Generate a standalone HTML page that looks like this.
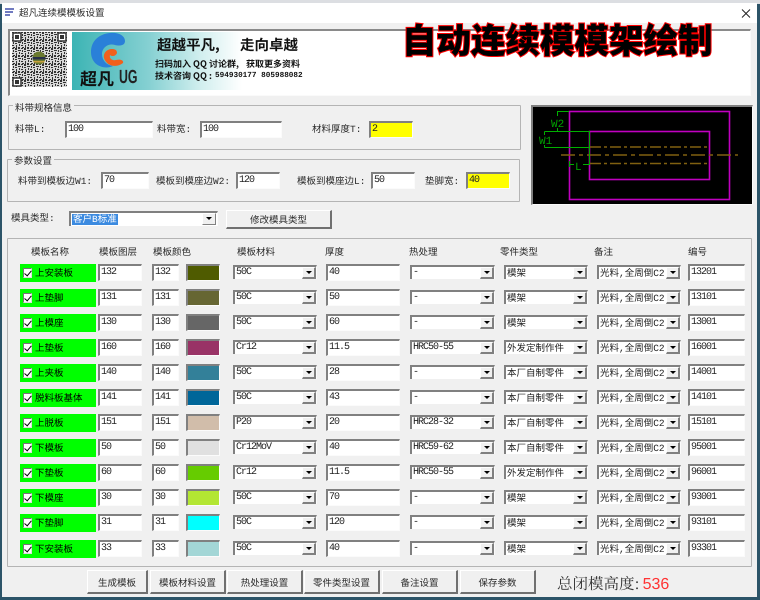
<!DOCTYPE html>
<html lang="zh"><head><meta charset="utf-8"><title>超凡连续模模板设置</title>
<style>
*{box-sizing:border-box}
html,body{margin:0;padding:0;width:760px;height:600px;overflow:hidden;background:#2c5468}
body{position:relative;font:10px "Liberation Mono","Noto Sans CJK SC",monospace;color:#222;text-rendering:geometricPrecision}
div,span,svg{position:absolute}
#strip{left:0;top:0;width:760px;height:4px;background:#dcdee2}
#win{left:2px;top:3px;width:755px;height:594px;background:#f0f0f0;overflow:hidden}
#tb{left:0;top:0;width:755px;height:20px;background:#fff}
.l{white-space:nowrap;font-size:9.500px;line-height:14px;color:#2a2a2a;transform:translateY(2px)}
.g{border:1px solid #b4b4b4;border-radius:1px}
.gt{background:#f0f0f0;padding:0 2px;white-space:nowrap;font-size:9.500px;line-height:13px;color:#2a2a2a;transform:translateY(2px)}
.i,.s{height:17px;background:#fff;border-top:2px solid #808080;border-left:2px solid #808080;border-bottom:1px solid #fbfbfb;border-right:1px solid #fbfbfb;font-size:10px;letter-spacing:-1px;line-height:13px;padding-left:1px;white-space:nowrap;overflow:hidden;color:#222}
.s{height:14px;margin-top:1px;border-bottom:0;line-height:12px}
.s u{position:absolute;right:0;top:0;width:14px;height:12px;background:#f0f0f0;border-right:2px solid #808080;border-bottom:2px solid #808080;border-top:1px solid #fff;border-left:1px solid #fff}
.s u:after{content:"";position:absolute;left:3px;top:3px;border-left:3px solid transparent;border-right:3px solid transparent;border-top:3px solid #000}
.z,.e{font-size:9.500px;letter-spacing:0;line-height:13px}
.r{left:0;width:755px;height:18px}
.r>div{top:0}
.n{left:18px;width:76px;height:18px;background:#00ff00;color:#000;font-size:9.500px;line-height:20px;padding-left:15px;white-space:nowrap}
.n i{position:absolute;left:3px;top:4px;width:9px;height:10px;background:#fff;border-top:1px solid #777;border-left:1px solid #777;border-right:1px solid #ddd;border-bottom:1px solid #ddd}
.n i:after{content:"";position:absolute;left:2px;top:0;width:3px;height:6px;border-right:1.500px solid #000;border-bottom:1.500px solid #000;transform:rotate(40deg)}
.a{left:96px;width:44px}.b{left:150px;width:27px}
.w{left:184px;width:34px;height:17px;border-top:2px solid #808080;border-left:2px solid #808080;border-bottom:1px solid #fbfbfb;border-right:1px solid #fbfbfb}
.m{left:231px;width:84px}.t{left:324px;width:74px}.h{left:408px;width:85px}.p{left:502px;width:84px}.q{left:595px;width:84px}.o{left:686px;width:57px}
.bt{height:24px;background:#f0f0f0;border-top:1px solid #fff;border-left:1px solid #fff;border-right:2px solid #707070;border-bottom:2px solid #707070;text-align:center;font-size:9.500px;line-height:25px;color:#2a2a2a;white-space:nowrap}
.b9{font:bold 9px 'Noto Sans CJK SC',sans-serif;line-height:12px;color:#111;white-space:pre}
</style></head><body>
<div id="strip"></div>
<div id="win">
<div id="tb"></div>
<svg style="left:3px;top:4px" width="14" height="12"><path d="M0 2H9M0 5H8M0 8H5" stroke="#1a2a9a" stroke-width="1.2" fill="none"/></svg>
<div class="l" style="left:17px;top:2px">超凡连续模模板设置</div>
<svg style="left:738px;top:5px" width="14" height="14"><path d="M2 1.500L10 9.500M10 1.500L2 9.500" stroke="#222" stroke-width="1" fill="none"/></svg>

<!-- banner -->
<div style="left:6px;top:26px;width:743px;height:67px;background:#fff;border-top:2px solid #8a8a8a;border-left:2px solid #8a8a8a;border-right:1px solid #fafafa;border-bottom:1px solid #fafafa"></div>
<svg style="left:10px;top:29px" width="55" height="55" viewBox="0 0 55 55">
<defs><pattern id="q" width="9" height="8" patternUnits="userSpaceOnUse"><rect width="9" height="8" fill="#d8d8d8"/><path d="M0 0h2v1H0zM3 0h2v2H3zM6 0h2v1H6zM1 2h1v2H1zM6 2h3v1H6zM3 3h2v1H3zM0 5h2v1H0zM4 5h1v3H4zM7 4h1v2H7zM1 7h2v1H1zM6 7h2v1H6z" fill="#333"/></pattern></defs>
<rect width="55" height="55" fill="url(#q)"/>
<g fill="#fff" stroke="#333" stroke-width="1.500"><rect x="1" y="1" width="8" height="8"/><rect x="46" y="1" width="8" height="8"/><rect x="1" y="46" width="8" height="8"/></g>
<g fill="#333"><rect x="3" y="3" width="4" height="4"/><rect x="48" y="3" width="4" height="4"/><rect x="3" y="48" width="4" height="4"/></g>
<circle cx="27" cy="26" r="6.500" fill="#6a7a30"/><rect x="20.500" y="25" width="13" height="2.500" fill="#28304a"/><rect x="21.500" y="29" width="11" height="1.500" fill="#c8a040"/>
</svg>
<div style="left:70px;top:29px;width:170px;height:58px;background:linear-gradient(90deg,#3cb4b4 0%,#85d0d2 45%,#d0eeee 75%,#ffffff 100%)"></div>
<svg style="left:85px;top:29px" width="45" height="40" viewBox="0 0 45 40">
<path d="M4 20C4 9 12 2 23 1C32 0 38 4 38 9C38 14 32 14 28 13C22 11 15 15 15 22C15 28 19 33 26 34C18 38 4 34 4 20Z" fill="#2a80d8"/>
<path d="M25 17C20 17 16 21 17 26C19 33 28 37 36 31C37 28 33 27 29 28C25 29 22 26 23 23C25 25 29 24 30 21C30 18 28 17 25 17Z" fill="#f0601c"/>
</svg>
<div style="left:78px;top:65px;font:bold 17px 'Noto Sans CJK SC',sans-serif;line-height:20px;color:#111;white-space:nowrap">超凡</div>
<div style="left:117px;top:65px;font:bold 19px 'Liberation Sans',sans-serif;line-height:20px;color:#222;transform:scaleX(.65);transform-origin:0 0;white-space:nowrap">UG</div>
<div style="left:155px;top:33px;font:bold 14.500px 'Noto Sans CJK SC',sans-serif;line-height:18px;color:#111;white-space:nowrap">超越平凡,</div>
<div style="left:238px;top:33px;font:bold 14.500px 'Noto Sans CJK SC',sans-serif;line-height:18px;color:#111;white-space:nowrap">走向卓越</div>
<div class="b9" style="left:153px;top:55px">扫码加入 QQ 讨论群,</div>
<div class="b9" style="left:244px;top:55px">获取更多资料</div>
<div class="b9" style="left:153px;top:67px">技术咨询 QQ :</div>
<div class="b9" style="left:213px;top:67px;font:bold 7.700px 'Liberation Mono',monospace;line-height:12px">594930177 805988082</div>
<div style="left:400px;top:15px;font:900 34.500px 'Noto Sans CJK SC',sans-serif;line-height:40px;color:#000;white-space:nowrap;-webkit-text-stroke:2px #f00;paint-order:stroke fill">自动连续模模架绘制</div>

<!-- group 1 -->
<div class="g" style="left:6px;top:102px;width:513px;height:45px"></div>
<div class="gt" style="left:11px;top:97px">料带规格信息</div>
<div class="l" style="left:13px;top:118px">料带L:</div>
<div class="i" style="left:63px;top:118px;width:88px">100</div>
<div class="l" style="left:155px;top:118px">料带宽:</div>
<div class="i" style="left:198px;top:118px;width:82px">100</div>
<div class="l" style="left:310px;top:118px">材料厚度T:</div>
<div class="i" style="left:367px;top:118px;width:44px;background:#ff0">2</div>

<!-- group 2 -->
<div class="g" style="left:5px;top:156px;width:513px;height:43px"></div>
<div class="gt" style="left:10px;top:150px">参数设置</div>
<div class="l" style="left:16px;top:170px">料带到模板边W1:</div>
<div class="i" style="left:99px;top:169px;width:48px">70</div>
<div class="l" style="left:154px;top:170px">模板到模座边W2:</div>
<div class="i" style="left:234px;top:169px;width:44px">120</div>
<div class="l" style="left:295px;top:170px">模板到模座边L:</div>
<div class="i" style="left:369px;top:169px;width:44px">50</div>
<div class="l" style="left:423px;top:170px">垫脚宽:</div>
<div class="i" style="left:464px;top:169px;width:44px;background:#ff0">40</div>

<!-- preview -->
<div style="left:529px;top:102px;width:222px;height:100px;background:#000;border-top:2px solid #808080;border-left:2px solid #808080;border-right:1px solid #fafafa;border-bottom:1px solid #fafafa"></div>
<svg style="left:529px;top:102px" width="222" height="100" viewBox="531 105 222 100">
<g fill="none" stroke="#c000c0" stroke-width="1.600"><rect x="569.500" y="111.500" width="160" height="88"/><rect x="589.500" y="131.500" width="120" height="48"/></g>
<g fill="none" stroke="#806010" stroke-width="1.500"><path d="M590 147H710M590 163.500H710" stroke-dasharray="11 3 3 3"/><path d="M561 155H738" stroke-dasharray="14 4 4 4"/></g>
<g fill="none" stroke="#00b000" stroke-width="1"><path d="M569 111.500H557.500V116M557.500 128V131.500M544.500 131.500H589.500V165M544.500 147.500H589M544.500 131.500V135M544.500 145V147.500M569.500 161V167M569.500 164.500H574M583 164.500H589"/></g>
<text x="551" y="127" font-size="11" fill="#00a000" font-family="Liberation Mono,monospace">W2</text>
<text x="539" y="144" font-size="11" fill="#00a000" font-family="Liberation Mono,monospace">W1</text>
<text x="575" y="170" font-size="11" fill="#00a000" font-family="Liberation Mono,monospace">L</text>
</svg>

<!-- mold type -->
<div class="l" style="left:9px;top:207px">模具类型:</div>
<div class="s z" style="left:67px;top:207px;width:149px;height:15px;line-height:13px;padding-left:1px"><span style="position:static;background:#3b8ae0;color:#fff;padding:0 1px">客户B标准</span><u style="height:12px;right:1px;border-bottom:1px solid #808080;border-right:1px solid #808080"></u></div>
<div class="bt" style="left:224px;top:207px;width:106px;height:19px;line-height:19px">修改模具类型</div>

<!-- table group -->
<div class="g" style="left:5px;top:235px;width:745px;height:329px"></div>
<div class="l" style="left:29px;top:241px">模板名称</div>
<div class="l" style="left:97px;top:241px">模板图层</div>
<div class="l" style="left:151px;top:241px">模板颜色</div>
<div class="l" style="left:235px;top:241px">模板材料</div>
<div class="l" style="left:323px;top:241px">厚度</div>
<div class="l" style="left:407px;top:241px">热处理</div>
<div class="l" style="left:498px;top:241px">零件类型</div>
<div class="l" style="left:592px;top:241px">备注</div>
<div class="l" style="left:686px;top:241px">编号</div>

<div class="r" style="top:261px"><div class="n"><i></i>上安装板</div><div class="i a">132</div><div class="i b">132</div><div class="w" style="background:#4f5b00"></div><div class="s m">50C<u></u></div><div class="i t">40</div><div class="s h">-<u></u></div><div class="s p z">模架<u></u></div><div class="s q e">光料,全周倒C2<u></u></div><div class="i o">13201</div></div>
<div class="r" style="top:286px"><div class="n"><i></i>上垫脚</div><div class="i a">131</div><div class="i b">131</div><div class="w" style="background:#666633"></div><div class="s m">50C<u></u></div><div class="i t">50</div><div class="s h">-<u></u></div><div class="s p z">模架<u></u></div><div class="s q e">光料,全周倒C2<u></u></div><div class="i o">13101</div></div>
<div class="r" style="top:311px"><div class="n"><i></i>上模座</div><div class="i a">130</div><div class="i b">130</div><div class="w" style="background:#666666"></div><div class="s m">50C<u></u></div><div class="i t">60</div><div class="s h">-<u></u></div><div class="s p z">模架<u></u></div><div class="s q e">光料,全周倒C2<u></u></div><div class="i o">13001</div></div>
<div class="r" style="top:336px"><div class="n"><i></i>上垫板</div><div class="i a">160</div><div class="i b">160</div><div class="w" style="background:#993366"></div><div class="s m">Cr12<u></u></div><div class="i t">11.5</div><div class="s h">HRC50-55<u></u></div><div class="s p z">外发定制作件<u></u></div><div class="s q e">光料,全周倒C2<u></u></div><div class="i o">16001</div></div>
<div class="r" style="top:361px"><div class="n"><i></i>上夹板</div><div class="i a">140</div><div class="i b">140</div><div class="w" style="background:#338099"></div><div class="s m">50C<u></u></div><div class="i t">28</div><div class="s h">-<u></u></div><div class="s p z">本厂自制零件<u></u></div><div class="s q e">光料,全周倒C2<u></u></div><div class="i o">14001</div></div>
<div class="r" style="top:386px"><div class="n"><i></i>脱料板基体</div><div class="i a">141</div><div class="i b">141</div><div class="w" style="background:#006699"></div><div class="s m">50C<u></u></div><div class="i t">43</div><div class="s h">-<u></u></div><div class="s p z">本厂自制零件<u></u></div><div class="s q e">光料,全周倒C2<u></u></div><div class="i o">14101</div></div>
<div class="r" style="top:411px"><div class="n"><i></i>上脱板</div><div class="i a">151</div><div class="i b">151</div><div class="w" style="background:#d1bdaa"></div><div class="s m">P20<u></u></div><div class="i t">20</div><div class="s h">HRC28-32<u></u></div><div class="s p z">本厂自制零件<u></u></div><div class="s q e">光料,全周倒C2<u></u></div><div class="i o">15101</div></div>
<div class="r" style="top:436px"><div class="n"><i></i>下模板</div><div class="i a">50</div><div class="i b">50</div><div class="w" style="background:#e0e0e0"></div><div class="s m">Cr12MoV<u></u></div><div class="i t">40</div><div class="s h">HRC59-62<u></u></div><div class="s p z">本厂自制零件<u></u></div><div class="s q e">光料,全周倒C2<u></u></div><div class="i o">95001</div></div>
<div class="r" style="top:461px"><div class="n"><i></i>下垫板</div><div class="i a">60</div><div class="i b">60</div><div class="w" style="background:#66cc00"></div><div class="s m">Cr12<u></u></div><div class="i t">11.5</div><div class="s h">HRC50-55<u></u></div><div class="s p z">外发定制作件<u></u></div><div class="s q e">光料,全周倒C2<u></u></div><div class="i o">96001</div></div>
<div class="r" style="top:486px"><div class="n"><i></i>下模座</div><div class="i a">30</div><div class="i b">30</div><div class="w" style="background:#b3e633"></div><div class="s m">50C<u></u></div><div class="i t">70</div><div class="s h">-<u></u></div><div class="s p z">模架<u></u></div><div class="s q e">光料,全周倒C2<u></u></div><div class="i o">93001</div></div>
<div class="r" style="top:511px"><div class="n"><i></i>下垫脚</div><div class="i a">31</div><div class="i b">31</div><div class="w" style="background:#00ffff"></div><div class="s m">50C<u></u></div><div class="i t">120</div><div class="s h">-<u></u></div><div class="s p z">模架<u></u></div><div class="s q e">光料,全周倒C2<u></u></div><div class="i o">93101</div></div>
<div class="r" style="top:537px"><div class="n"><i></i>下安装板</div><div class="i a">33</div><div class="i b">33</div><div class="w" style="background:#a3d6d6"></div><div class="s m">50C<u></u></div><div class="i t">40</div><div class="s h">-<u></u></div><div class="s p z">模架<u></u></div><div class="s q e">光料,全周倒C2<u></u></div><div class="i o">93301</div></div>

<!-- bottom buttons -->
<div class="bt" style="left:85px;top:567px;width:61px">生成模板</div>
<div class="bt" style="left:148px;top:567px;width:76px">模板材料设置</div>
<div class="bt" style="left:225px;top:567px;width:76px">热处理设置</div>
<div class="bt" style="left:302px;top:567px;width:76px">零件类型设置</div>
<div class="bt" style="left:380px;top:567px;width:76px">备注设置</div>
<div class="bt" style="left:458px;top:567px;width:76px">保存参数</div>
<div style="left:555px;top:570px;font:15.500px 'Noto Serif CJK SC','Liberation Sans',serif;line-height:20px;color:#333;white-space:nowrap">总闭模高度:<span style="position:static;font:16px 'Liberation Sans',sans-serif;color:#f33;margin-left:3px">536</span></div>
</div>
</body></html>
